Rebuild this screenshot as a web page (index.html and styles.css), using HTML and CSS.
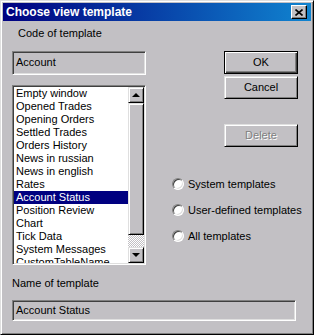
FILE: index.html
```
<!DOCTYPE html>
<html>
<head>
<meta charset="utf-8">
<title>Choose view template</title>
<link rel="stylesheet" href="styles.css">
</head>
<body>
<div class="window">
<div class="titlebar">
<span class="title">Choose view template</span>
<span class="close"><svg width="8" height="7" viewBox="0 0 8 7"><path d="M0.5 0.5 L7.5 6.5 M7.5 0.5 L0.5 6.5" stroke="#000" stroke-width="1.6" fill="none"/></svg></span>
</div>
<div class="dialog">
<div class="top">
<div class="left">
<div class="label code-label">Code of template</div>
<div class="field code-field">Account</div>
<div class="listbox">
<ul class="items">
<li>Empty window</li>
<li>Opened Trades</li>
<li>Opening Orders</li>
<li>Settled Trades</li>
<li>Orders History</li>
<li>News in russian</li>
<li>News in english</li>
<li>Rates</li>
<li class="selected">Account Status</li>
<li>Position Review</li>
<li>Chart</li>
<li>Tick Data</li>
<li>System Messages</li>
<li>CustomTableName</li>
</ul>
<div class="scrollbar">
<span class="sb-btn up"></span>
<span class="thumb"></span>
<span class="track"></span>
<span class="sb-btn down"></span>
</div>
</div>
</div>
<div class="right">
<div class="buttons">
<span class="btn default">OK</span>
<span class="btn">Cancel</span>
<span class="btn disabled delete">Delete</span>
</div>
<div class="radios">
<div class="radio-row"><span class="radio"></span>System templates</div>
<div class="radio-row"><span class="radio"></span>User-defined templates</div>
<div class="radio-row"><span class="radio"></span>All templates</div>
</div>
</div>
</div>
<div class="label name-label">Name of template</div>
<div class="field name-field">Account Status</div>
</div>
</div>
</body>
</html>
```
FILE: styles.css
```
body {
 margin: 0;
 background: #c2c0c4;
}
.window {
 background: #c2c0c4;
 border: 1px solid;
 border-color: #dfdfdf #000 #000 #dfdfdf;
 box-shadow: inset 1px 1px #fff, inset -1px -1px #808080;
 box-sizing: border-box;
 color: #000;
 font-family: 'Liberation Sans', Arial, sans-serif;
 font-size: 11px;
 height: 335px;
 padding: 2px;
 width: 314px;
}
.titlebar {
 align-items: center;
 background: linear-gradient(to right, #000080, #1084d0);
 color: #fff;
 display: flex;
 height: 18px;
 padding-left: 3px;
}
.title {
 font-size: 12px;
 font-weight: bold;
}
.close {
 align-items: center;
 background: #c2c0c4;
 border: 1px solid;
 border-color: #fff #000 #000 #fff;
 box-shadow: inset -1px -1px #808080;
 box-sizing: border-box;
 display: flex;
 height: 14px;
 justify-content: center;
 margin: 0 4px 0 auto;
 width: 16px;
}
.dialog {
 padding: 6px 0 0 9px;
}
.top {
 display: flex;
}
.left {
 width: 134px;
}
.label {
 height: 13px;
 line-height: 13px;
}
.code-label {
 margin-left: 6px;
}
.field {
 border: 1px solid;
 border-color: #808080 #fff #fff #808080;
 box-shadow: inset 1px 1px #404040, inset -1px -1px #dfdfdf;
 box-sizing: border-box;
 padding-left: 3px;
}
.code-field {
 height: 24px;
 line-height: 21px;
 margin-top: 11px;
 width: 134px;
}
.listbox {
 background: #fff;
 border: 1px solid;
 border-color: #808080 #fff #fff #808080;
 box-shadow: inset 1px 1px #404040, inset -1px -1px #dfdfdf;
 box-sizing: border-box;
 display: flex;
 height: 180px;
 margin-top: 10px;
 padding: 1px;
 width: 134px;
}
.items {
 flex: 1;
 list-style: none;
 margin: 0;
 overflow: hidden;
 padding: 0;
}
.items li {
 height: 13px;
 line-height: 13px;
 padding-left: 2px;
 white-space: nowrap;
}
.items li.selected {
 background: #000080;
 color: #fff;
}
.scrollbar {
 display: flex;
 flex-direction: column;
 width: 16px;
}
.sb-btn, .thumb, .btn {
 background: #c2c0c4;
 border: 1px solid;
 border-color: #dfdfdf #000 #000 #dfdfdf;
 box-shadow: inset 1px 1px #fff, inset -1px -1px #808080;
 box-sizing: border-box;
}
.sb-btn {
 align-items: center;
 display: flex;
 height: 16px;
 justify-content: center;
}
.sb-btn:before {
 border-left: 4px solid transparent;
 border-right: 4px solid transparent;
 content: "";
 height: 0;
 width: 0;
}
.up:before {
 border-bottom: 4px solid #000;
}
.down:before {
 border-top: 4px solid #000;
}
.thumb {
 height: 132px;
}
.track {
 background: repeating-conic-gradient(#fff 0 25%, #c2c0c4 0 50%) 0 0 / 2px 2px;
 flex: 1;
}
.right {
 display: flex;
 flex-direction: column;
}
.buttons {
 display: flex;
 flex-direction: column;
 margin-left: 78px;
 margin-top: 24px;
}
.btn {
 height: 23px;
 line-height: 21px;
 text-align: center;
 width: 74px;
}
.btn + .btn {
 margin-top: 2px;
}
.btn.default {
 border-color: #000;
 box-shadow: inset 1px 1px #fff, inset -1px -1px #404040, inset -2px -2px #808080;
}
.btn.delete {
 margin-top: 25px;
}
.btn.disabled {
 color: #808080;
 text-shadow: 1px 1px #fff;
}
.radios {
 display: flex;
 flex-direction: column;
 gap: 13px;
 margin: 30px 0 0 26px;
}
.radio-row {
 align-items: center;
 display: flex;
 height: 13px;
 white-space: nowrap;
}
.radio {
 background: #fff;
 border: 1px solid;
 border-color: #808080 #fff #fff #808080;
 border-radius: 50%;
 box-shadow: inset 1px 1px #404040, inset -1px -1px #dfdfdf;
 box-sizing: border-box;
 height: 12px;
 margin-right: 4px;
 width: 12px;
}
.name-label {
 margin-top: 12px;
}
.name-field {
 height: 21px;
 line-height: 19px;
 margin-top: 10px;
 width: 284px;
}
```
